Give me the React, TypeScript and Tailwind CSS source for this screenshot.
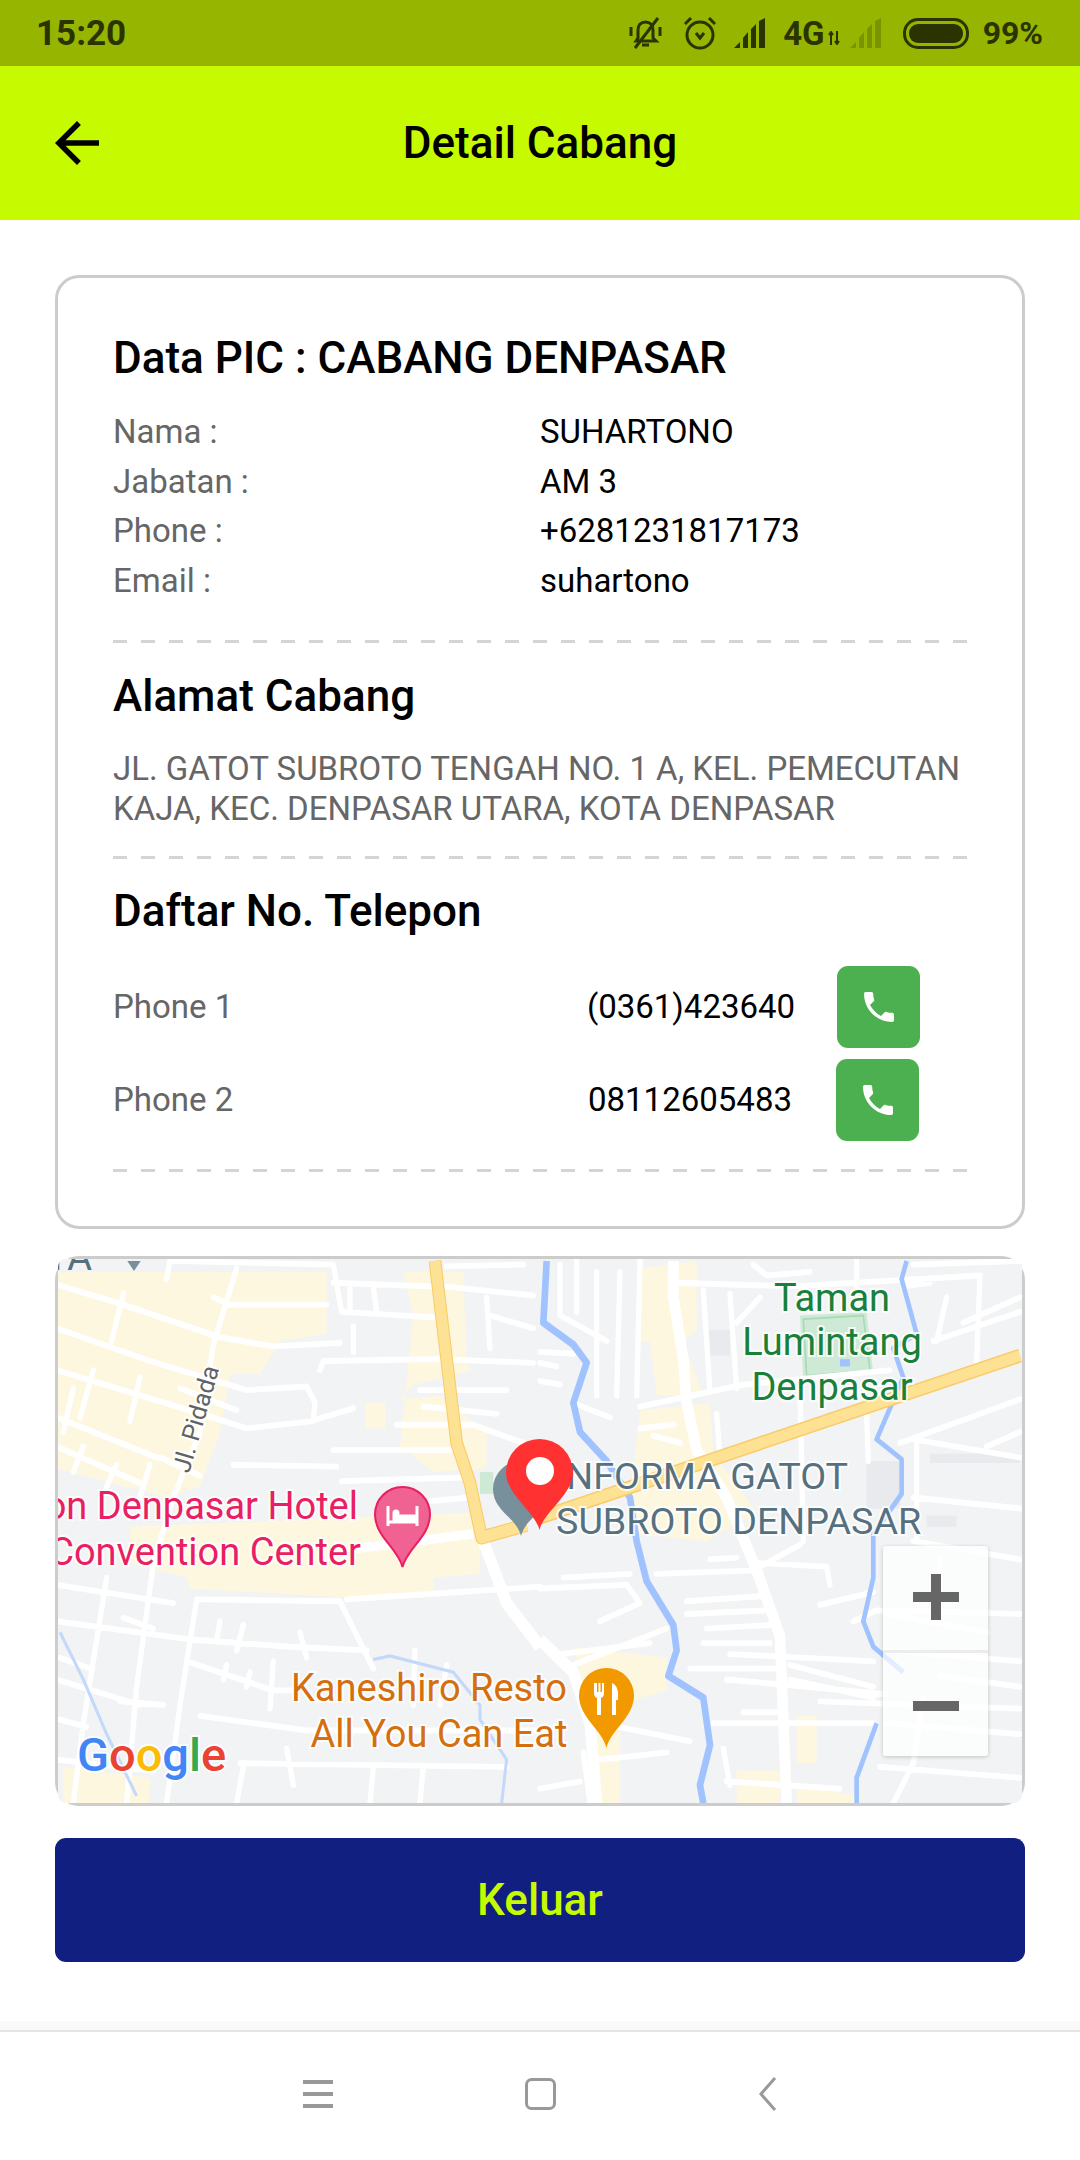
const picRows = [
  { label: "Nama :", value: "SUHARTONO" },
  { label: "Jabatan :", value: "AM 3" },
  { label: "Phone :", value: "+6281231817173" },
  { label: "Email :", value: "suhartono" },
];

const phones = [
  { label: "Phone 1", value: "(0361)423640", rowClass: "pr-[48px]" },
  { label: "Phone 2", value: "08112605483", rowClass: "pr-[49px]" },
];

// map geometry is traced in crop coordinates, the two groups below scale it back to page pixels
const creamLeft = [
  "M50 60L590 60L860 60L860 230L720 250L660 340L570 340L540 500L480 650L380 680L50 600Z",
  "M270 760L1320 720L1320 890L1180 900L1180 940L1030 960L450 930L440 900L270 860Z",
  "M1090 60L1270 60L1280 320L1300 330L1120 370L1080 410L1200 400L1340 500L1340 600L1180 610L1080 540L1120 180Z",
  "M975 420L1035 420L1035 490L975 490Z",
  "M70 1420L330 1450L330 1520L70 1520Z",
];
const creamRight = [
  "M300 50L470 30L470 220L430 250L490 400L350 400L330 250L300 250Z",
  "M300 440L510 420L520 560L650 720L500 800L290 780L270 680Z",
  "M100 1090L380 1120L380 1210L230 1250L130 1190Z",
  "M590 1430L720 1430L720 1520L590 1520Z",
  "M770 1470L950 1500L950 1520L770 1520Z",
  "M770 1280L830 1280L830 1410L770 1410Z",
  "M170 1300L240 1300L240 1520L170 1520Z",
];

const roadsLeft =
  "M50 95L250 150L540 240L700 265L900 255 M250 120L215 250 M50 215L330 305L620 385L800 375L825 420L820 470L620 490L500 455L50 330 M50 460L350 570 M50 540L300 640 M590 50L520 260L480 500L400 680L340 860L290 1200L260 1520 M390 30L880 40L905 170L1180 185 M560 150L860 150 M840 330L850 305L1190 300L1480 310 M940 210L940 280 M880 550L1230 550 M580 590L890 595 M905 635L1270 625 M830 465L940 435 M1140 385L1400 385 M1150 430L1370 450 M1070 480L1300 480L1480 540 M1210 100L1480 125 M1220 45L1450 40 M1340 130L1350 270 M1350 180L1480 215 M1170 690L1290 680 M480 960L900 965L1000 1150 M470 960L420 1250L380 1520 M50 920L400 970 M50 1020L450 1070L750 1090L980 1100 M200 900L130 1300L100 1520 M440 1130L700 1210L760 1210 M50 1180L300 1250 M480 1280L800 1320L1500 1320 M540 1020L530 1070 M610 1030L590 1100 M780 1050L800 1120 M560 1140L550 1180 M630 1160L620 1200 M700 1130L690 1260 M1125 1100L1120 1250 M1220 1140L1200 1250 M600 1410L1400 1420 M920 960L1170 945 M1170 945L1500 925 M100 380L70 500 M160 330L120 460 M300 350L270 470 M610 1420L590 1520 M740 1370L760 1470 M1000 1420L990 1520 M1150 1420L1140 1520 M330 590L300 680 M230 590L200 650 M130 540L100 610 M240 1240L370 1250 M250 1010L340 1040 M60 1120L150 1150 M60 1290L140 1310 M50 1400L340 1430 M520 130L570 150 M420 380L590 440 M360 570L480 620 M390 30L380 80 M930 100L930 170 M1000 100L1010 170 M880 90L1170 100";
const roadsRight =
  "M60 40L60 180L200 250 M110 30L110 170 M170 60L170 400 M240 60L230 400 M300 30L290 400 M410 90L760 100L1320 70L1310 310 M0 280L100 285 M0 310L50 320 M0 360L60 370 M100 420L210 460 M300 430L610 370L1050 330 M490 110L510 390 M570 120L590 380 M660 130L590 200 M950 30L950 100 M1220 130L1190 250 M1180 250L1440 170 M1080 530L1440 410 M1120 520L1440 570 M1130 530L1130 800 M1340 540L1440 500 M1120 680L1440 710 M1120 800L1440 850 M530 450L540 570 M980 450L985 580 M780 380L790 800 M660 860L860 870L870 920 M350 890L650 880 M440 965L680 950 M440 1000L680 990 M840 975L1000 940 M500 1040L700 1030 M490 1080L690 1080 M570 1110L1000 1130 M450 1150L730 1150 M560 1180L1040 1220 M750 1140L1000 1200 M610 1270L720 1270 M520 1300L1000 1300 M750 1180L1000 1230 M510 850L590 845 M660 870L780 810 M1040 1000L1340 1050 M60 1110L330 1080 M100 1140L380 1040 M180 1300L450 1350 M560 1460L900 1480 M550 1370L570 1470 M940 1020L1010 990L1440 1000 M1040 1300L1440 1330 M1020 1420L1440 1450 M1060 1520L1120 1410L1150 1230 M840 1240L1440 1260 M0 930L260 920L300 970L180 1020 M70 900L270 890 M640 40L680 70L810 60 M1090 100L1170 90 M1270 200L1440 130 M1120 40L1440 30 M300 490L400 480 M340 510L420 530 M1200 850L1200 1000 M1040 1100L1440 1130 M1200 1170L1440 1200 M180 1400L380 1380 M0 1480L120 1460 M130 1380L150 1520";

function StatusBar() {
  return (
    <div className="flex h-[66px] items-center justify-between bg-[#95b500] pl-[36px] pr-[37px] text-[#2b3300]">
      <span className="text-[35px] font-bold leading-none">15:20</span>
      <div className="flex items-center">
        <svg viewBox="0 0 33 34" className="h-[34px] w-[33px]" fill="none" stroke="currentColor" strokeWidth="3">
          <path d="M7 25L9 22V14C9 9 12 6 16.500 6C21 6 24 9 24 14V22L27 25Z" />
          <path d="M13 29H20M2 11V20M31 11V20M6 32L29 2" />
        </svg>
        <svg viewBox="0 0 36 36" className="ml-[20px] h-[36px] w-[36px]" fill="none" stroke="currentColor" strokeWidth="3">
          <circle cx="18" cy="20" r="13" />
          <path d="M14 18L18 23L22 18M3 9L9 3M33 9L27 3" />
        </svg>
        <svg viewBox="0 0 32 30" className="ml-[16px] h-[30px] w-[32px]" fill="currentColor">
          <path d="M0 30L6 24V30ZM9 20L14 14V30H9ZM17 11L22 6V30H17ZM25 3L31 0V30H25Z" />
        </svg>
        <span className="ml-[17px] text-[33px] font-bold leading-none">4G</span>
        <svg viewBox="0 0 12 14" className="ml-[3px] mt-[10px] h-[14px] w-[12px]" fill="none" stroke="currentColor" strokeWidth="2">
          <path d="M3 14V2M1 4L3 1L5 4M9 0V12M7 10L9 13L11 10" />
        </svg>
        <svg viewBox="0 0 32 30" className="ml-[10px] h-[30px] w-[32px] opacity-25" fill="currentColor">
          <path d="M0 30L6 24V30ZM9 20L14 14V30H9ZM17 11L22 6V30H17ZM25 3L31 0V30H25Z" />
        </svg>
        <div className="ml-[21px] flex h-[31px] w-[66px] items-center justify-center rounded-[15px] border-[3px] border-[#2b3300]">
          <div className="h-[19px] w-[54px] rounded-[9px] bg-[#2b3300]" />
        </div>
        <span className="ml-[14px] text-[32px] font-bold leading-none">99%</span>
      </div>
    </div>
  );
}

function AppBar() {
  return (
    <div className="relative flex h-[154px] items-center justify-center bg-[#c6fa00]">
      <svg viewBox="0 0 24 24" fill="black" className="absolute left-[44px] top-[44px] h-[66px] w-[66px]">
        <path d="M20 11H7.830l5.590-5.590L12 4l-8 8 8 8 1.410-1.410L7.830 13H20v-2z" />
      </svg>
      <h1 className="text-[44px] font-medium text-black">Detail Cabang</h1>
    </div>
  );
}

function Dashed() {
  return <div className="h-[3px] w-full bg-[repeating-linear-gradient(90deg,#d4d4d4_0_14px,transparent_14px_28px)]" />;
}

function BranchCard() {
  return (
    <section className="h-[954px] rounded-[24px] border-[3px] border-[#cccccc] pl-[55px] pr-[54px] pt-[56px]">
      <h2 className="text-[44px] font-medium leading-[48px] text-black">Data PIC : CABANG DENPASAR</h2>
      <div className="mt-[25px]">
        {picRows.map((row) => (
          <div key={row.label} className="flex h-[49.500px] items-center text-[33px]">
            <span className="w-[427px] text-[#666666]">{row.label}</span>
            <span className="text-black">{row.value}</span>
          </div>
        ))}
      </div>
      <div className="mt-[35px]">
        <Dashed />
      </div>
      <h2 className="mt-[29px] text-[44px] font-medium leading-[48px] text-black">Alamat Cabang</h2>
      <p className="mt-[29px] text-[33px] leading-[40px] text-[#666666]">
        JL. GATOT SUBROTO TENGAH NO. 1 A, KEL. PEMECUTAN
        <br />
        KAJA, KEC. DENPASAR UTARA, KOTA DENPASAR
      </p>
      <div className="mt-[27px]">
        <Dashed />
      </div>
      <h2 className="mt-[28px] text-[44px] font-medium leading-[48px] text-black">Daftar No. Telepon</h2>
      <div className="mt-[31px] flex flex-col gap-[11px]">
        {phones.map((p) => (
          <div key={p.label} className={`flex items-center ${p.rowClass}`}>
            <span className="flex-1 text-[33px] text-[#666666]">{p.label}</span>
            <span className="w-[220px] text-center text-[33px] text-black">{p.value}</span>
            <button className="ml-[36px] flex h-[82px] w-[83px] items-center justify-center rounded-[11px] bg-[#4caf50]">
              <svg viewBox="0 0 24 24" fill="white" className="h-[40px] w-[40px]">
                <path d="M6.620 10.790c1.440 2.830 3.760 5.140 6.590 6.590l2.200-2.200c.27-.27.67-.36 1.020-.24 1.120.37 2.330.57 3.570.57.55 0 1 .45 1 1V20c0 .55-.45 1-1 1-9.390 0-17-7.610-17-17 0-.55.45-1 1-1h3.500c.55 0 1 .45 1 1 0 1.250.2 2.450.57 3.570.11.35.03.74-.25 1.020l-2.200 2.200z" />
              </svg>
            </button>
          </div>
        ))}
      </div>
      <div className="mt-[28px]">
        <Dashed />
      </div>
    </section>
  );
}

function Pin({ x, y, w, h, fill, stroke }: { x: number; y: number; w: number; h: number; fill: string; stroke?: string }) {
  const r = w / 2;
  const cx = x + r;
  return (
    <path
      d={`M${cx} ${y + h}C${cx - 4} ${y + h - 18} ${x} ${y + r + 22} ${x} ${y + r}A${r} ${r} 0 0 1 ${x + w} ${y + r}C${x + w} ${y + r + 22} ${cx + 4} ${y + h - 18} ${cx} ${y + h}Z`}
      fill={fill}
      stroke={stroke}
      strokeWidth={stroke ? 2 : 0}
    />
  );
}

function MapPanel() {
  const label = { paintOrder: "stroke" as const, stroke: "#ffffff", strokeWidth: 4, strokeOpacity: 0.8 };
  return (
    <section className="relative mt-[27px] h-[550px] rounded-[24px] border-[3px] border-[#cccccc]">
      <div className="h-full overflow-hidden rounded-[8px] bg-[#f1f3f4]">
        <svg viewBox="58 1259 964 544" className="h-full w-full">
          <g transform="translate(40 1250) scale(.3333 .364)" fill="none">
            {creamLeft.map((d) => (
              <path key={d} d={d} fill="#fef7e0" />
            ))}
            <path d="M1320 610h40v60h-40z" fill="#ceead6" />
            <path d={roadsLeft} stroke="#ffffff" strokeWidth="16" strokeLinecap="round" strokeLinejoin="round" />
            <path d="M60 1050L130 1180L200 1330L290 1500" stroke="#c3d8fb" strokeWidth="9" />
            <path d="M1000 1125L1050 1115L1240 1160L1320 1250L1320 1290L1400 1400L1385 1520" stroke="#c3d8fb" strokeWidth="9" />
            <path d="M1330 800L1400 970L1500 1090" stroke="#ffffff" strokeWidth="34" />
            <path d="M950 820L1300 780" stroke="#ffffff" strokeWidth="26" />
            <path d="M1185 30L1220 300L1250 530L1290 640L1325 790L1460 755" stroke="#fbc967" strokeWidth="38" strokeLinejoin="round" />
            <path d="M1185 30L1220 300L1250 530L1290 640L1325 790L1460 755" stroke="#fde293" strokeWidth="32" strokeLinejoin="round" />
            <path d="M262 30H302L282 58Z" fill="#78909c" />
          </g>
          <g transform="translate(540 1250) scale(.3333 .364)" fill="none">
            {creamRight.map((d) => (
              <path key={d} d={d} fill="#fef7e0" />
            ))}
            <path d="M500 220h70v70h-70zM980 580h100v130h-100zM1170 560h270v25h-270zM1160 730h90v30h-90z" fill="#e8eaed" />
            <path d="M780 180L980 170L1000 340L790 360Z" fill="#ceead6" />
            <path d="M790 190L970 180L990 330L800 345Z" stroke="#a8dab5" strokeWidth="5" />
            <path d={roadsRight} stroke="#ffffff" strokeWidth="16" strokeLinecap="round" strokeLinejoin="round" />
            <path d="M400 30L400 130L430 300L440 420L470 550L560 680L650 880L720 1060L740 1520" stroke="#ffffff" strokeWidth="32" />
            <path d="M0 1070L100 1160L150 1300L170 1520" stroke="#ffffff" strokeWidth="34" />
            <path
              d="M20 30L10 200L100 260L140 310L100 420L120 500L200 580L270 680L290 800L320 910L400 1030L410 1100L385 1170L490 1230L510 1360L480 1470L490 1520"
              stroke="#a0c3ff"
              strokeWidth="20"
              strokeLinejoin="round"
            />
            <path
              d="M1100 30L1085 80L1130 230L1060 270L1090 350L1010 520L1085 575L1085 670L1000 780L1000 900L970 1020L1000 1090L1090 1160"
              stroke="#a0c3ff"
              strokeWidth="14"
              strokeLinejoin="round"
            />
            <path d="M1010 1300L950 1450L950 1520" stroke="#a0c3ff" strokeWidth="14" />
            <path d="M900 300h30v20h-30z" fill="#a0c3ff" />
            <path d="M0 735L1440 290" stroke="#fbc967" strokeWidth="38" />
            <path d="M0 735L1440 290" stroke="#fde293" strokeWidth="30" />
          </g>

          <g className="font-[Roboto,sans-serif]" fontSize="38">
            <text x="92" y="1270" fill="#56707f" textAnchor="end">
              TA
            </text>
            <text x="0" y="0" fill="#5f6368" fontSize="25" style={label} transform="translate(189 1474) rotate(-74)">
              Jl. Pidada
            </text>
            <text x="358" y="1519" fill="#e91e63" textAnchor="end" style={label}>
              on Denpasar Hotel
            </text>
            <text x="361" y="1565" fill="#e91e63" textAnchor="end" style={label}>
              Convention Center
            </text>
            <text x="429" y="1701" fill="#d56e0c" textAnchor="middle" style={label}>
              Kaneshiro Resto
            </text>
            <text x="439" y="1747" fill="#d56e0c" textAnchor="middle" style={label}>
              All You Can Eat
            </text>
            <text x="832" y="1311" fill="#188038" textAnchor="middle" style={label}>
              Taman
            </text>
            <text x="832" y="1355" fill="#188038" textAnchor="middle" style={label}>
              Lumintang
            </text>
            <text x="832" y="1400" fill="#188038" textAnchor="middle" style={label}>
              Denpasar
            </text>
            <text x="556" y="1489" fill="#56707f" fontSize="37.700" style={label}>
              INFORMA GATOT
            </text>
            <text x="556" y="1534" fill="#56707f" fontSize="37.700" style={label}>
              SUBROTO DENPASAR
            </text>
            <text x="77" y="1771" fontSize="47" fontWeight="500" style={{ paintOrder: "stroke", stroke: "#ffffff", strokeWidth: 4, strokeOpacity: 0.8 }}>
              <tspan fill="#4285f4">G</tspan>
              <tspan fill="#ea4335">o</tspan>
              <tspan fill="#fbbc05">o</tspan>
              <tspan fill="#4285f4">g</tspan>
              <tspan fill="#34a853">l</tspan>
              <tspan fill="#ea4335">e</tspan>
            </text>
          </g>

          <Pin x={375} y={1487} w={55} h={80} fill="#f06292" stroke="#e91e63" />
          <path d="M388 1506v20M417 1506v20M388 1522h29M394 1516h23v6h-23z" stroke="#ffffff" strokeWidth="3" fill="#ffffff" />
          <circle cx="396" cy="1513" r="3.500" fill="#ffffff" />

          <Pin x={579} y={1668} w={55} h={80} fill="#f29900" />
          <path
            d="M594 1683v10q0 4 3 5v17h4v-17q3-1 3-5v-10h-2v9h-1.500v-9h-2v9h-1.500v-9zM612 1683q6 2 6 12v5h-2v15h-4z"
            fill="#ffffff"
          />

          <Pin x={493} y={1461} w={56} h={75} fill="#78909c" />
          <Pin x={506} y={1439} w={67} h={91} fill="#ff3131" />
          <circle cx="540" cy="1471" r="14" fill="#ffffff" />
        </svg>
      </div>

      {/* zoom buttons */}
      <div className="absolute left-[825px] top-[287px] flex h-[210px] w-[105px] flex-col rounded-[3px] bg-white/70 shadow-[0_1px_4px_rgba(0,0,0,0.2)]">
        <div className="relative flex-1 border-b-[3px] border-[#e6e6e6]/70">
          <div className="absolute left-[30px] top-[46px] h-[10px] w-[46px] bg-[#666666]" />
          <div className="absolute left-[48px] top-[28px] h-[46px] w-[10px] bg-[#666666]" />
        </div>
        <div className="relative flex-1">
          <div className="absolute left-[30px] top-[48px] h-[10px] w-[46px] bg-[#666666]" />
        </div>
      </div>
    </section>
  );
}

function NavBar() {
  return (
    <footer className="flex h-[139px] flex-col">
      <div className="h-[9px] bg-[#f9f9f9]" />
      <div className="flex flex-1 items-center justify-center border-t-[2px] border-[#e5e5e5] bg-white pb-[4px]">
        <svg viewBox="0 0 474 34" className="h-[34px] w-[474px]" fill="none" stroke="#999999">
          <path d="M0 5H30M0 17H30M0 29H30" strokeWidth="4" />
          <rect x="223.500" y="2.500" width="28" height="29" rx="5" strokeWidth="3" />
          <path d="M472 1L458 17L472 33" strokeWidth="3" />
        </svg>
      </div>
    </footer>
  );
}

export default function App() {
  return (
    <div className="flex h-[2160px] w-[1080px] flex-col bg-white font-[Roboto,sans-serif]">
      <StatusBar />
      <AppBar />
      <main className="flex-1 px-[55px] pt-[55px]">
        <BranchCard />
        <MapPanel />
        <button className="mt-[32px] flex h-[124px] w-full items-center justify-center rounded-[11px] bg-[#101f80] text-[44px] font-medium text-[#c6fa00]">
          Keluar
        </button>
      </main>
      <NavBar />
    </div>
  );
}
